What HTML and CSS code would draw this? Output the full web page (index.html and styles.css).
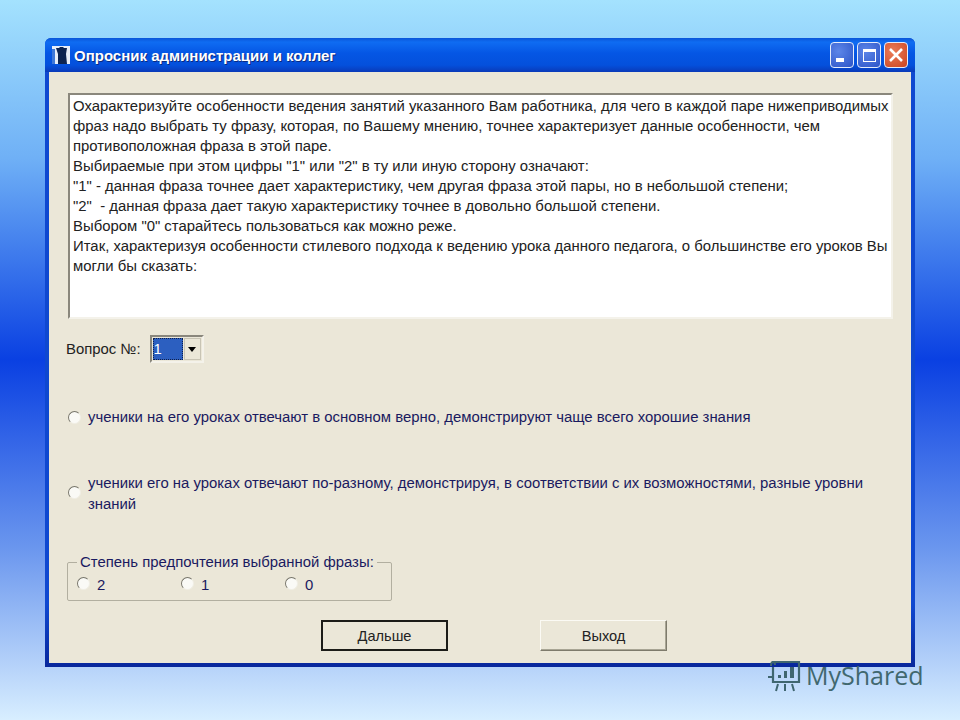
FILE: index.html
```html
<!DOCTYPE html>
<html lang="ru">
<head>
<meta charset="utf-8">
<title>Опросник администрации и коллег</title>
<link rel="stylesheet" href="styles.css">
</head>
<body>
<div class="window">
  <div class="titlebar">
    <svg class="app-icon" width="18" height="18" viewBox="0 0 18 18">
      <rect width="18" height="18" fill="#e8eef8"/>
      <path d="M6 18V8L4 2h3l1-1h3l1 1h3l-1 6 1 10z" fill="#0c2350"/>
      <rect x="0" y="3" width="3" height="15" fill="#3f78d8"/>
    </svg>
    <span class="title">Опросник администрации и коллег</span>
    <div class="controls">
      <div class="ctl ctl-blue"><span class="min-mark"></span></div>
      <div class="ctl ctl-blue"><span class="max-mark"></span></div>
      <div class="ctl ctl-red">
        <svg width="16" height="16" viewBox="0 0 16 16"><path d="M2 2l12 12M14 2L2 14" stroke="#fff" stroke-width="2.6" fill="none"/></svg>
      </div>
    </div>
  </div>
  <div class="client">
    <div class="memo">Охарактеризуйте особенности ведения занятий указанного Вам работника, для чего в каждой паре нижеприводимых<br>фраз надо выбрать ту фразу, которая, по Вашему мнению, точнее характеризует данные особенности, чем<br>противоположная фраза в этой паре.<br>Выбираемые при этом цифры "1" или "2" в ту или иную сторону означают:<br>"1" - данная фраза точнее дает характеристику, чем другая фраза этой пары, но в небольшой степени;<br>"2"&nbsp; - данная фраза дает такую характеристику точнее в довольно большой степени.<br>Выбором "0" старайтесь пользоваться как можно реже.<br>Итак, характеризуя особенности стилевого подхода к ведению урока данного педагога, о большинстве его уроков Вы<br>могли бы сказать:</div>
    <div class="question-row">
      <span class="q-label">Вопрос №:</span>
      <div class="combo">
        <span class="combo-value">1</span>
        <span class="combo-btn"><span class="combo-arrow"></span></span>
      </div>
    </div>
    <div class="option option-one">
      <span class="radio"></span>
      <span class="option-text">ученики на его уроках отвечают в основном верно, демонстрируют чаще всего хорошие знания</span>
    </div>
    <div class="option option-two">
      <span class="radio"></span>
      <span class="option-text">ученики его на уроках отвечают по-разному, демонстрируя, в соответствии с их возможностями, разные уровни<br>знаний</span>
    </div>
    <fieldset class="group">
      <legend>Степень предпочтения выбранной фразы:</legend>
      <div class="choice"><span class="radio"></span><span>2</span></div>
      <div class="choice"><span class="radio"></span><span>1</span></div>
      <div class="choice"><span class="radio"></span><span>0</span></div>
    </fieldset>
    <div class="buttons">
      <div class="btn btn-default">Дальше</div>
      <div class="btn">Выход</div>
    </div>
  </div>
</div>
<div class="watermark">
  <svg width="36" height="34" viewBox="0 0 36 34">
    <path d="M5 4h27v20H6V9" fill="none" stroke="#3f6670" stroke-width="2.2"/>
    <path d="M1 19h5M4 8c0-3 1-4 2-4s2 1 2 3" fill="none" stroke="#3f6670" stroke-width="2"/>
    <path d="M11 20h3v-3h-3zM17 20h3v-7h-3zM23 20h4V9h-4z" fill="#3f6670"/>
    <path d="M11 26l-2 7M18 26v7M25 26l2 7" stroke="#3f6670" stroke-width="2"/>
  </svg>
  <span>MyShared</span>
</div>
</body>
</html>
```
FILE: styles.css
```css
html, body {
  margin: 0;
  height: 720px;
  overflow: hidden;
}
body {
  position: relative;
  width: 960px;
  font-family: "Liberation Sans", Arial, sans-serif;
  background: linear-gradient(180deg, #a4e2fe 0%, #6fb0f6 22%, #0a40e2 50%, #6a96ee 76%, #d8eeff 100%);
}
.window {
  position: absolute;
  left: 45px;
  top: 38px;
  width: 870px;
  height: 629px;
  box-sizing: border-box;
  display: flex;
  flex-direction: column;
  background: linear-gradient(180deg, #0f48d0 0%, #0f48d0 90%, #08279c 100%);
  border-radius: 6px 6px 0 0;
  padding: 0 4px 4px;
}
.titlebar {
  height: 34px;
  flex: none;
  display: flex;
  align-items: center;
  margin: 0 -4px;
  padding: 0 7px;
  border-radius: 6px 6px 0 0;
  background: linear-gradient(180deg, #0a55d8 0%, #0f6cf2 12%, #0556e4 45%, #0450dc 80%, #0a3ab8 100%);
}
.app-icon { flex: none; }
.title {
  margin-left: 4px;
  color: #fff;
  font-weight: 700;
  font-size: 15px;
  text-shadow: 1px 1px 0 #0a2a80;
  white-space: nowrap;
  flex: 1;
}
.controls {
  display: flex;
  gap: 3px;
}
.ctl {
  width: 24px;
  height: 26px;
  box-sizing: border-box;
  border: 1.5px solid #e4ecfb;
  border-radius: 4px;
  position: relative;
  display: flex;
  align-items: center;
  justify-content: center;
}
.ctl-blue { background: radial-gradient(circle at 35% 35%, #5c86e8, #2c54c8); }
.ctl-red { background: radial-gradient(circle at 35% 35%, #ea7c58, #cc4420); }
.min-mark {
  position: absolute;
  left: 5px;
  bottom: 5px;
  width: 8px;
  height: 4px;
  background: #fff;
}
.max-mark {
  width: 13px;
  height: 13px;
  box-sizing: border-box;
  border: 1.5px solid #fff;
  border-top-width: 3px;
}
.client {
  flex: 1;
  background: #ebe7d8;
  position: relative;
  padding: 21px 18px 0 19px;
  color: #1a1a50;
  font-size: 14.9px;
}
.memo {
  box-sizing: border-box;
  height: 226px;
  width: 825px;
  background: #fff;
  border: 2px solid #8a877c;
  border-right-color: #f4f2ea;
  border-bottom-color: #f4f2ea;
  padding: 1px 0 0 3px;
  line-height: 20px;
  color: #222;
  white-space: nowrap;
}
.question-row {
  display: flex;
  align-items: center;
  gap: 9px;
  margin-top: 16px;
  margin-left: -2px;
  color: #222;
}
.combo {
  width: 54px;
  height: 28px;
  box-sizing: border-box;
  border: 2px solid #8a877c;
  border-right-color: #f4f2ea;
  border-bottom-color: #f4f2ea;
  display: flex;
  padding: 1px;
  background: #ebe7d8;
}
.combo-value {
  width: 30px;
  background: #2c5fc0;
  color: #fff;
  outline: 1px dotted #10204a;
  outline-offset: -1px;
  line-height: 23px;
  padding-left: 1px;
  box-sizing: border-box;
}
.combo-btn {
  flex: 1;
  display: flex;
  align-items: center;
  justify-content: center;
  border: 1px solid #c8c4b4;
  margin-left: 1px;
}
.combo-arrow {
  width: 0;
  height: 0;
  border: 4px solid transparent;
  border-top: 5px solid #000;
  border-bottom: 0;
}
.radio {
  flex: none;
  display: inline-block;
  box-sizing: border-box;
  width: 13px;
  height: 13px;
  border-radius: 50%;
  background: #fafaf6;
  border: 1.5px solid;
  border-color: #77756a #f0eee4 #f0eee4 #77756a;
}
.option {
  display: flex;
  align-items: center;
  gap: 7px;
  line-height: 21px;
  color: #1a1a60;
  white-space: nowrap;
}
.option-one { margin-top: 44px; }
.option-two { margin-top: 45px; }
.option-two .radio { margin-bottom: 4px; }
.group {
  box-sizing: border-box;
  margin: 38px 0 0 -1px;
  width: 325px;
  height: 48px;
  padding: 0 0 0 9px;
  border: 1px solid #b2afa0;
  border-radius: 2px;
  display: flex;
  color: #1a1a60;
  line-height: 16px;
}
.group legend {
  padding: 0 3px;
  line-height: 18px;
}
.choice {
  width: 104px;
  display: flex;
  align-items: center;
  gap: 7px;
  height: 18px;
  margin-top: 5px;
}
.choice .radio { margin-top: -3px; }
.buttons {
  display: flex;
  gap: 92px;
  margin: 19px 0 0 253px;
}
.btn {
  box-sizing: border-box;
  width: 127px;
  height: 31px;
  display: flex;
  align-items: center;
  justify-content: center;
  color: #222;
  background: #ebe7d8;
  font-size: 14.6px;
  border: 1px solid;
  border-color: #fbfaf4 #7e7b6c #7e7b6c #fbfaf4;
  box-shadow: inset -1px -1px 0 #a8a594;
}
.btn-default {
  border: 2px solid #1c1c18;
  box-shadow: none;
}
.watermark {
  position: absolute;
  left: 767px;
  top: 658px;
  display: flex;
  align-items: center;
  gap: 3px;
  color: #41686f;
  font-family: "Open Sans", sans-serif;
  font-size: 25px;
}
.watermark svg { flex: none; }
```
